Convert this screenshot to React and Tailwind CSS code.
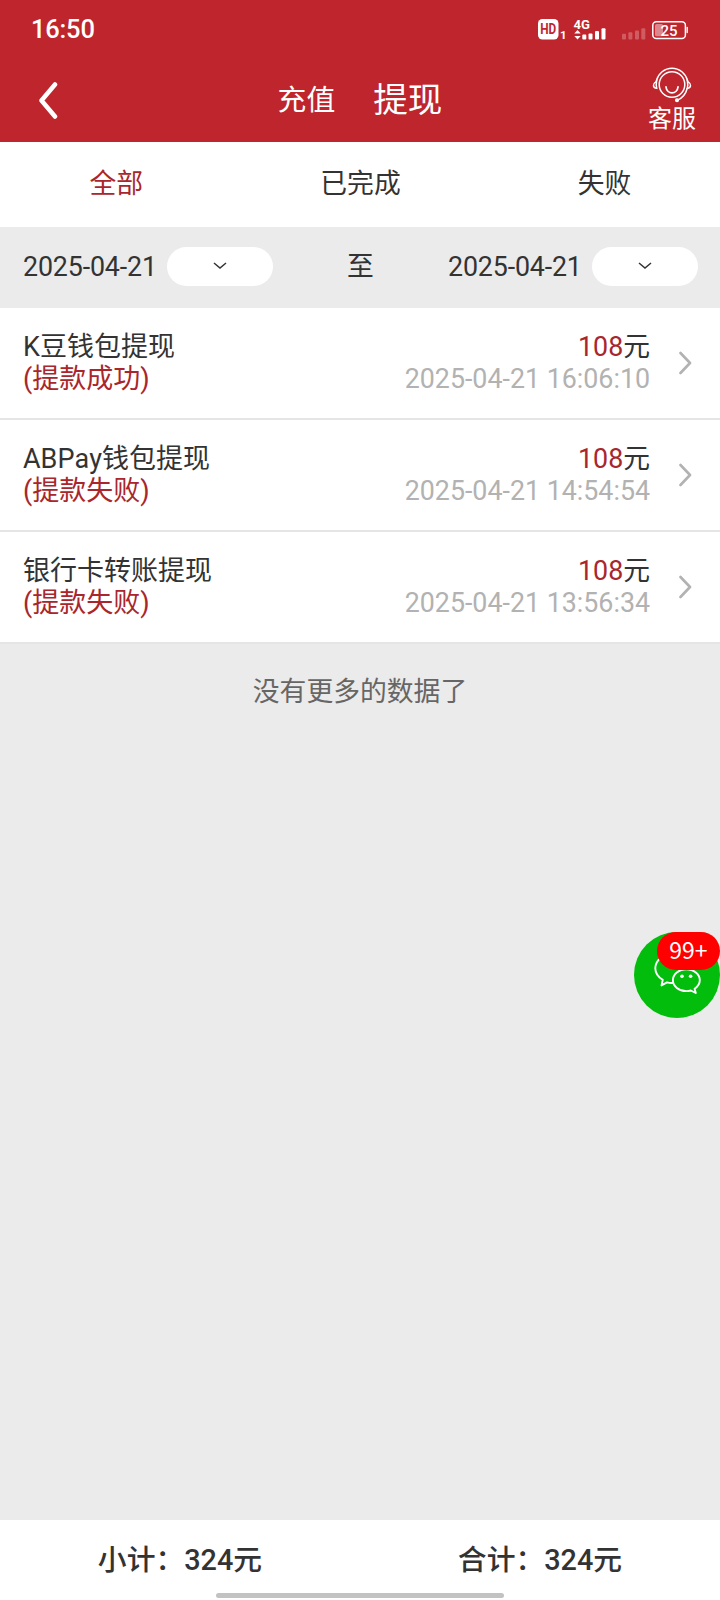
import React, { useState } from 'react';

const RECORDS = [
  { id: 1, title: 'K豆钱包提现', status: '提款成功', amount: 108, time: '2025-04-21 16:06:10' },
  { id: 2, title: 'ABPay钱包提现', status: '提款失败', amount: 108, time: '2025-04-21 14:54:54' },
  { id: 3, title: '银行卡转账提现', status: '提款失败', amount: 108, time: '2025-04-21 13:56:34' },
];

const TABS = ['全部', '已完成', '失败'];

function StatusIcons() {
  return (
    <svg width="152" height="24" viewBox="0 0 152 24" fill="none">
      {/* HD badge */}
      <rect x="0" y="2" width="20.5" height="20.5" rx="4.5" fill="#fff" />
      <text x="10.2" y="17.2" textAnchor="middle" textLength="16" lengthAdjust="spacingAndGlyphs" className="font-['Roboto'] text-[14px] font-bold" fill="#bf252c">HD</text>
      <text x="22" y="22.4" className="font-['Roboto'] text-[11.5px] font-bold" fill="#fff">1</text>

      {/* 4G signal */}
      <text x="35.5" y="12" textLength="16.5" lengthAdjust="spacingAndGlyphs" className="font-['Roboto'] text-[13px] font-bold" fill="#fff">4G</text>
      <path d="M39.5 13l3.2 3.6h-6.4zM39.5 22.6l3.2-3.6h-6.4z" fill="#fff" />
      <g fill="#fff">
        <rect x="44.3" y="17.5" width="4" height="5" rx="1" />
        <rect x="50.5" y="16.5" width="4" height="6" rx="1" />
        <rect x="57" y="14" width="4" height="8.5" rx="1" />
        <rect x="63.5" y="11.3" width="4" height="11.2" rx="1" />
      </g>

      {/* second sim, no signal */}
      <g fill="#fff" opacity="0.25">
        <rect x="84" y="16.8" width="4" height="5.7" rx="1" />
        <rect x="90.4" y="15.2" width="4" height="7.3" rx="1" />
        <rect x="97" y="13.4" width="4" height="9.1" rx="1" />
        <rect x="103.3" y="11.2" width="4" height="11.3" rx="1" />
      </g>

      {/* battery */}
      <rect x="114.8" y="4.8" width="32.6" height="16.6" rx="3.5" stroke="#fff" strokeWidth="1.5" />
      <rect x="117" y="7" width="8" height="12.2" rx="1.5" fill="#fff" opacity="0.45" />
      <path d="M149.2 10.5v5" stroke="#fff" strokeWidth="1.4" strokeLinecap="round" />
      <text x="131" y="18.6" textAnchor="middle" className="font-['Roboto'] text-[15px] font-medium" fill="#fff">25</text>
    </svg>
  );
}

function ServiceIcon() {
  return (
    <svg width="40" height="36" viewBox="0 0 40 36" fill="none" stroke="#fff" strokeWidth="1.5" strokeLinecap="round">
      <circle cx="20" cy="17.5" r="12.8" />
      <path d="M4.4 13.6C6.3 6.6 12.5 1.2 20 1.2S33.7 6.6 35.6 13.6" />
      <path d="M4.6 14C2.6 15.5 1.5 17 1.5 18.5s1.1 2.6 3.2 2.8c-.6-2.4-.6-4.9-.1-7.3z" />
      <path d="M35.4 14c2 1.5 3.1 3 3.1 4.5s-1.1 2.6-3.2 2.8c.6-2.4.6-4.9.1-7.3z" />
      <path d="M35.2 21.5c-1.5 5.7-5.2 9.7-9.7 11.6" />
      <circle cx="25" cy="33.3" r="1.3" fill="#fff" />
      <path d="M14 20c.4 3.4 2.9 5.9 6 5.9s5.6-2.5 6-5.9" strokeWidth="1.8" />
    </svg>
  );
}

function WechatIcon() {
  return (
    <svg width="48" height="42" viewBox="0 0 48 42" fill="none" stroke="#fff" strokeWidth="1.9" strokeLinejoin="round">
      <path d="M19 31c-2 .2-4 0-6-.6l-5.5 3 1.3-5.5C4 25 1.3 20.8 1.3 16.3 1.3 8.3 9 2 18.3 2c8 0 14.7 4.6 16.5 10.8" />
      <path d="M32.3 17.2c7.5 0 13.5 5 13.5 11.1 0 3.7-2.2 6.5-5.2 8.5l1.2 4.2-5-2.5c-1.4.4-2.9.6-4.5.6-7.4 0-13.4-4.9-13.4-10.8s6-11.1 13.4-11.1z" />
      <g fill="#fff" stroke="none">
        <circle cx="12.5" cy="11.5" r="1.6" />
        <circle cx="28" cy="24.2" r="1.8" />
        <circle cx="36.6" cy="24.2" r="1.8" />
      </g>
    </svg>
  );
}

function DateSelect({ value }) {
  return (
    <div className="flex items-center">
      <span className="w-[144px] tracking-[-0.15px]">{value}</span>
      <button className="w-[106px] h-[39px] -mt-[2px] rounded-full bg-white flex items-center justify-center">
        <svg width="14" height="8" viewBox="0 0 14 8" fill="none" className="-mt-[2px]">
          <path d="M1 1l6 5 6-5" stroke="#333" strokeWidth="1.5" />
        </svg>
      </button>
    </div>
  );
}

function RecordRow({ record }) {
  return (
    <li className="h-[112px] border-b-2 border-[#e5e5e5] bg-white flex items-center pl-[23px] pr-[28px] leading-[32px]">
      <div className="flex-1 text-[27px] [font-kerning:none]">
        <div>{record.title}</div>
        <div className="text-[#a8262c]">({record.status})</div>
      </div>
      <div className="text-right">
        <div>
          <span className="text-[#a8262c]">{record.amount}</span>元
        </div>
        <div className="text-[#b2b2b2]">{record.time}</div>
      </div>
      <svg width="13" height="24" viewBox="0 0 13 24" fill="none" className="ml-[29px]">
        <path d="M1.5 2l9.5 10-9.500 10" stroke="#b2b2b2" strokeWidth="2.6" strokeLinecap="round" strokeLinejoin="round" />
      </svg>
    </li>
  );
}

function App() {
  const [tab, setTab] = useState('全部');
  const total = RECORDS.reduce((sum, r) => sum + r.amount, 0);

  return (
    <div className="relative w-full h-[1600px] flex flex-col bg-[#ebebeb] text-[#333] text-[26.8px] font-['Roboto','Noto_Sans_CJK_SC',sans-serif] overflow-hidden">
      {/* Header */}
      <header className="h-[142px] bg-[#bf252c] text-white">
        <div className="h-[58px] pl-[31px] pr-[30px] flex items-center justify-between">
          <span className="pt-[2px] text-[25.5px] font-medium leading-none tracking-[-0.2px]">16:50</span>
          <StatusIcons />
        </div>
        <div className="h-[84px] grid grid-cols-[1fr_auto_1fr] items-center">
          <button className="pl-[38px]">
            <svg width="20" height="38" viewBox="0 0 20 38" fill="none">
              <path d="M17 3.5L3.5 19.5l13.5 16" stroke="#fff" strokeWidth="4.5" strokeLinecap="round" strokeLinejoin="round" />
            </svg>
          </button>
          <div className="flex items-center gap-[38px] pt-[2px]">
            <span className="text-[28.8px]">充值</span>
            <span className="text-[34.6px]">提现</span>
          </div>
          <button className="justify-self-end mr-[24px] flex flex-col items-center">
            <ServiceIcon />
            <span className="mt-px text-[24px] leading-[30px]">客服</span>
          </button>
        </div>
      </header>

      {/* Tabs */}
      <nav className="h-[85px] pl-px bg-white flex items-center justify-around">
        {TABS.map((name) => (
          <button key={name} onClick={() => setTab(name)} className={tab === name ? 'text-[#a8262c]' : ''}>
            {name}
          </button>
        ))}
      </nav>

      {/* Date range */}
      <div className="h-[81px] pl-[23px] pr-[22px] flex items-center justify-between">
        <DateSelect value="2025-04-21" />
        <span>至</span>
        <DateSelect value="2025-04-21" />
      </div>

      {/* Records */}
      <ul>
        {RECORDS.map((record) => (
          <RecordRow key={record.id} record={record} />
        ))}
      </ul>
      <p className="mt-[28px] text-center text-[#666]">没有更多的数据了</p>

      {/* Footer */}
      <footer className="mt-auto h-[80px] bg-white flex flex-col font-medium">
        <div className="flex-1 pt-[9px] grid grid-cols-2 items-center text-center text-[28.8px]">
          <span>小计：{total}元</span>
          <span>合计：{total}元</span>
        </div>
        <div className="mx-auto mb-[2px] w-[288px] h-[5px] rounded-full bg-[#c2c2c2]" />
      </footer>

      {/* Floating chat button */}
      <button className="absolute right-0 top-[932px] size-[86px] rounded-full bg-[#02bd0b]">
        <span className="absolute left-[20px] top-[20px]">
          <WechatIcon />
        </span>
        <span className="absolute right-0 top-0 w-[63px] h-[38px] rounded-full bg-[#f00] text-white text-[23px] leading-[35px] text-center font-['Noto_Sans_CJK_SC',sans-serif]">
          99+
        </span>
      </button>
    </div>
  );
}

export default App;
